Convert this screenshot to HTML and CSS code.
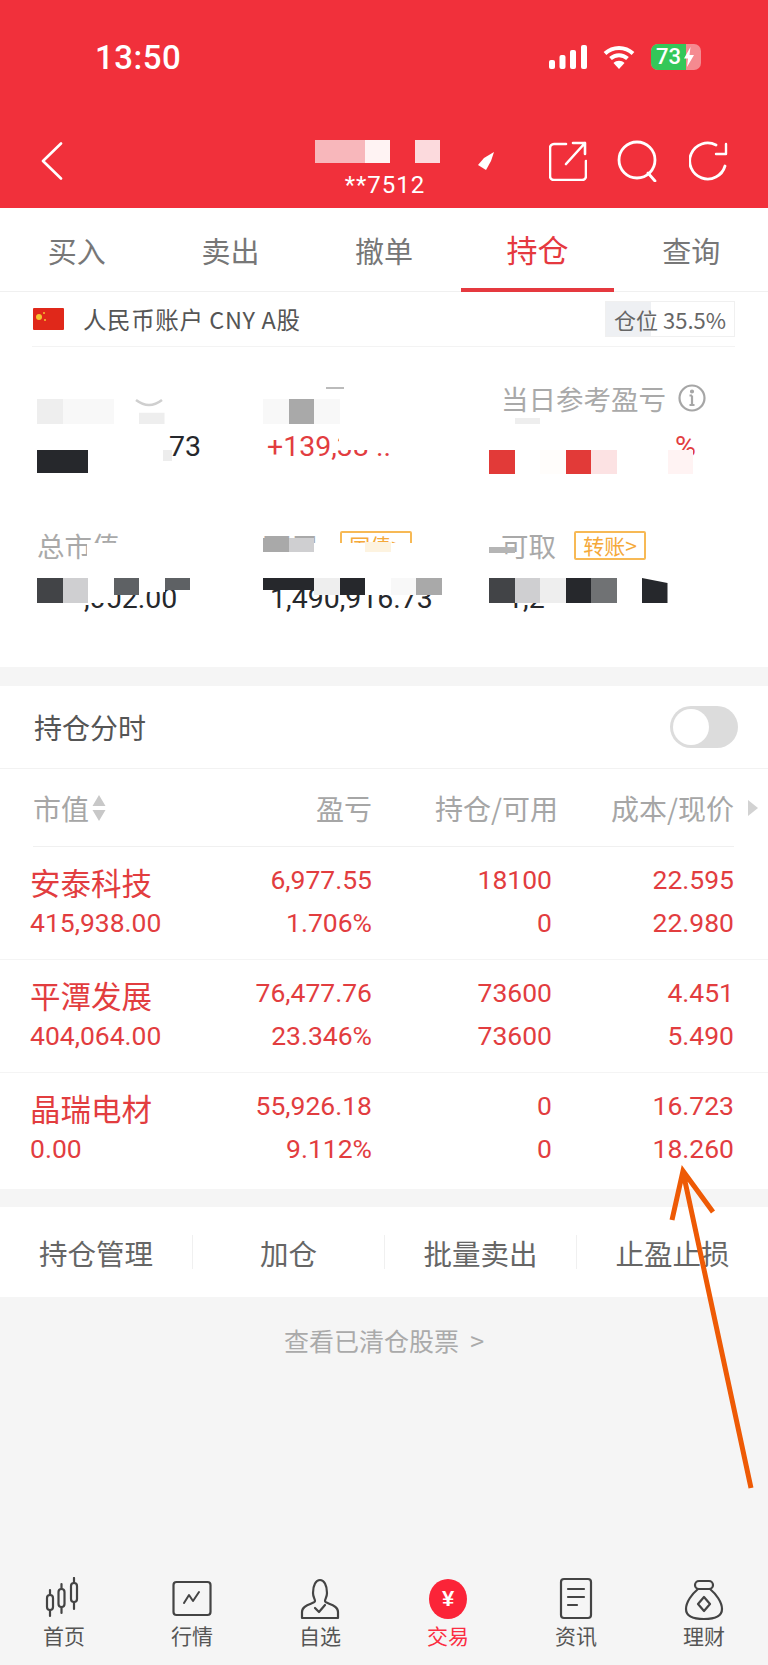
FILE: index.html
```html
<!DOCTYPE html>
<html lang="zh-CN">
<head>
    <meta charset="UTF-8">
    <meta name="viewport" content="width=device-width, initial-scale=1.0">
    <title>持仓</title>
    <link rel="stylesheet" href="styles.css">
</head>
<body>
    <div class="page">
        <!-- 顶部红色区域 -->
        <header class="top">
            <div class="status">
                <span class="time">13:50</span>
                <div class="status-icons">
                    <svg width="38" height="24" viewBox="0 0 38 24" fill="#fff">
                        <rect x="0" y="15" width="6" height="9" rx="2"/>
                        <rect x="10.5" y="10" width="6" height="14" rx="2"/>
                        <rect x="21" y="5" width="6" height="19" rx="2"/>
                        <rect x="32" y="0" width="6" height="24" rx="2"/>
                    </svg>
                    <svg width="32" height="24" viewBox="0 0 32 24" fill="none" stroke="#fff" stroke-width="4">
                        <path d="M2 8.5C10 1 22 1 30 8.5"/>
                        <path d="M7.5 13.5C12.5 9 19.5 9 24.5 13.5"/>
                        <path d="M16 24l-5.500-6c3-3 8-3 11 0z" fill="#fff" stroke="none"/>
                    </svg>
                    <div class="battery">
                        <div class="battery-fill"></div>
                        <span class="battery-num">73</span>
                        <svg class="battery-bolt" width="10" height="20" viewBox="0 0 10 20" fill="#fff"><path d="M6.500 0L0 11.500h4L3 20l7-12H5.500z"/></svg>
                    </div>
                </div>
            </div>
            <nav class="nav">
                <svg class="back" width="22" height="38" viewBox="0 0 22 38" fill="none" stroke="#fff" stroke-width="2.600" stroke-linecap="round" stroke-linejoin="round"><path d="M20 1.500L2 19l18 17.500"/></svg>
                <div class="acct">
                    <div class="acct-name">
                        <i class="pink1"></i><i class="pink1"></i><i class="pink2"></i><i></i><i class="pink3"></i>
                    </div>
                    <span class="acct-no">**7512</span>
                    <svg class="acct-mark" width="18" height="18" viewBox="0 0 18 18" fill="#fff"><path d="M7 6L17 0l-3 9-5 9-8-5z"/></svg>
                </div>
                <div class="nav-icons">
                    <svg width="38" height="40" viewBox="0 0 38 40" fill="none" stroke="#fff" stroke-width="2.600" stroke-linecap="round" stroke-linejoin="round">
                        <path d="M17 3H5a4 4 0 0 0-4 4v28a4 4 0 0 0 4 4h28a4 4 0 0 0 4-4V20"/>
                        <path d="M17 23L36 2M24 2h12v11"/>
                    </svg>
                    <svg width="42" height="42" viewBox="0 0 42 42" fill="none" stroke="#fff" stroke-width="2.800" stroke-linecap="round">
                        <circle cx="20" cy="20" r="18"/>
                        <path d="M31 33l7 8"/>
                    </svg>
                    <svg width="40" height="40" viewBox="0 0 40 40" fill="none" stroke="#fff" stroke-width="2.800" stroke-linecap="round" stroke-linejoin="round">
                        <path d="M36 25A18 18 0 1 1 27 4"/>
                        <path d="M37 3v10H27" stroke-width="2.400"/>
                    </svg>
                </div>
            </nav>
        </header>

        <!-- 交易标签 -->
        <div class="tabs">
            <div class="tab">买入</div>
            <div class="tab">卖出</div>
            <div class="tab">撤单</div>
            <div class="tab tab-on">持仓</div>
            <div class="tab">查询</div>
        </div>

        <!-- 资产概览 -->
        <section class="assets">
            <div class="account">
                <svg class="flag" width="31" height="22" viewBox="0 0 31 22">
                    <rect width="31" height="22" rx="1" fill="#e0281a"/>
                    <circle cx="6" cy="9" r="3" fill="#f4c430"/>
                    <circle cx="11" cy="5" r="1" fill="#f4c430"/>
                    <circle cx="12" cy="12" r="1" fill="#f4c430"/>
                </svg>
                <span class="account-name">人民币账户 CNY A股</span>
                <div class="ratio">
                    <div class="ratio-fill" style="width: 35.5%"></div>
                    <span class="ratio-text">仓位 35.5%</span>
                </div>
            </div>

            <div class="summary">
                <div class="cell">
                    <div class="label">&nbsp;</div>
                    <div class="value value-r1-left">73</div>
                    <div class="mos mos-l1">
                        <i class="k6"></i><i class="k7"></i><i class="k7"></i><i></i><i class="k6 clip-a"></i>
                    </div>
                    <svg class="eye" width="28" height="10" viewBox="0 0 28 10" fill="none" stroke="#cfcfcf" stroke-width="2.500"><path d="M1 1c4 3 8 5 13 5s9-2 13-5"/></svg>
                    <div class="mos mos-v1">
                        <i class="k0"></i><i class="k0"></i>
                    </div>
                    <div class="patch"></div>
                </div>
                <div class="cell">
                    <div class="label">&nbsp;</div>
                    <div class="value up">+139,38 ..</div>
                    <div class="wipe wipe-profit"></div>
                    <div class="mos mos-l1">
                        <i class="k7"></i><i class="k4"></i><i class="k7"></i>
                    </div>
                    <div class="dash"></div>
                </div>
                <div class="cell cell-wide">
                    <div class="label">当日参考盈亏
                        <svg class="info" width="28" height="30" viewBox="0 0 28 30" fill="none" stroke="#a6a6a6" stroke-width="2.200">
                            <circle cx="14" cy="15" r="12.500"/>
                            <path d="M14 12.500V22M11.500 12.500H14M11.500 22h5"/>
                            <circle cx="14" cy="8.500" r="1" fill="#a6a6a6"/>
                        </svg>
                    </div>
                    <div class="value up value-pct">%</div>
                    <div class="mos mos-l3">
                        <i></i><i class="k6 short"></i>
                    </div>
                    <div class="mos mos-v3">
                        <i class="r0"></i><i></i><i class="r3"></i><i class="r0"></i><i class="r1"></i><i></i><i></i><i class="r2"></i>
                    </div>
                </div>

                <div class="cell cell-low">
                    <div class="label">总市值</div>
                    <div class="value value-market">,002.00</div>
                    <div class="wipe wipe-market"></div>
                    <div class="mos mos-v2">
                        <i class="k1 h25"></i><i class="k5 h25"></i><i class="h25"></i><i class="k2 h17"></i><i class="h14"></i><i class="k2 h11"></i>
                    </div>
                </div>
                <div class="cell cell-low">
                    <div class="label">可用<span class="tag tag-bond">国债&gt;</span></div>
                    <div class="value value-avail">1,490,916.73</div>
                    <div class="wipe wipe-avail"></div>
                    <div class="mos mos-l2">
                        <i class="k4"></i><i class="k5"></i><i class="k8"></i><i class="k8"></i><i class="o1"></i>
                    </div>
                    <div class="mos mos-v2">
                        <i class="k0 h11"></i><i class="k0 h11"></i><i class="k6 h17"></i><i class="k0 h17"></i><i class="h17"></i><i class="k7 h17"></i><i class="k4 h17"></i>
                    </div>
                </div>
                <div class="cell cell-low cell-wide">
                    <div class="label">可取<span class="tag">转账&gt;</span></div>
                    <div class="value value-take">1,2</div>
                    <div class="bar"></div>
                    <div class="mos mos-v2">
                        <i class="k1 h25"></i><i class="k5 h25"></i><i class="k6 h25"></i><i class="k0 h25"></i><i class="k3 h25"></i><i class="h25"></i><i class="k0 h25 clip-b"></i>
                    </div>
                </div>
            </div>
        </section>

        <!-- 持仓列表 -->
        <section class="holdings">
            <div class="chart-row">
                <span>持仓分时</span>
                <div class="toggle"><div class="knob"></div></div>
            </div>
            <div class="grid grid-head">
                <div class="head-first">市值
                    <svg width="14" height="26" viewBox="0 0 14 26" fill="#c8c8c8"><path d="M7 0l6.500 11H.5zM7 26L.5 15h13z"/></svg>
                </div>
                <div class="num">盈亏</div>
                <div class="num">持仓/可用</div>
                <div class="num">成本/现价</div>
                <svg class="head-more" width="10" height="16" viewBox="0 0 10 16" fill="#d2d2d2"><path d="M0 0l10 8-10 8z"/></svg>
            </div>

            <div class="grid stock">
                <div class="name">安泰科技</div>
                <div class="num">6,977.55</div>
                <div class="num">18100</div>
                <div class="num">22.595</div>
                <div>415,938.00</div>
                <div class="num">1.706%</div>
                <div class="num">0</div>
                <div class="num">22.980</div>
            </div>
            <div class="grid stock">
                <div class="name">平潭发展</div>
                <div class="num">76,477.76</div>
                <div class="num">73600</div>
                <div class="num">4.451</div>
                <div>404,064.00</div>
                <div class="num">23.346%</div>
                <div class="num">73600</div>
                <div class="num">5.490</div>
            </div>
            <div class="grid stock stock-last">
                <div class="name">晶瑞电材</div>
                <div class="num">55,926.18</div>
                <div class="num">0</div>
                <div class="num">16.723</div>
                <div>0.00</div>
                <div class="num">9.112%</div>
                <div class="num">0</div>
                <div class="num">18.260</div>
            </div>
        </section>

        <div class="actions">
            <div class="action">持仓管理</div>
            <div class="action">加仓</div>
            <div class="action">批量卖出</div>
            <div class="action">止盈止损</div>
        </div>

        <div class="cleared">查看已清仓股票 &nbsp;&gt;</div>

        <!-- 底部导航 -->
        <footer class="tabbar">
            <div class="bar-item">
                <svg width="40" height="44" viewBox="0 0 40 44" fill="none" stroke="#444" stroke-width="2.200" stroke-linecap="round">
                    <rect x="3" y="18" width="6" height="15" rx="3"/>
                    <path d="M6 13v5M6 33v6"/>
                    <rect x="14.500" y="12" width="6" height="18" rx="3"/>
                    <path d="M17.500 7v5M17.500 30v6"/>
                    <rect x="27" y="6" width="6" height="19" rx="3"/>
                    <path d="M30 1v5M30 25v7"/>
                </svg>
                <span>首页</span>
            </div>
            <div class="bar-item">
                <svg width="40" height="44" viewBox="0 0 40 44" fill="none" stroke="#444" stroke-width="2.200" stroke-linejoin="round" stroke-linecap="round">
                    <rect x="1.500" y="5" width="37" height="33" rx="3"/>
                    <path d="M12 26l5-8 4 6 6-9" stroke-width="2"/>
                </svg>
                <span>行情</span>
            </div>
            <div class="bar-item">
                <svg width="40" height="44" viewBox="0 0 40 44" fill="none" stroke="#444" stroke-width="2.200" stroke-linejoin="round" stroke-linecap="round">
                    <path d="M13 16c0-8 3-13 7-13s7 5 7 13c0 4-2 6-2 8 0 3 13 3 13 11v6H2v-6c0-8 13-8 13-11 0-2-2-4-2-8z"/>
                    <path d="M15 31l4 4 6-7"/>
                </svg>
                <span>自选</span>
            </div>
            <div class="bar-item bar-on">
                <div class="coin">¥</div>
                <span>交易</span>
            </div>
            <div class="bar-item">
                <svg width="40" height="44" viewBox="0 0 40 44" fill="none" stroke="#444" stroke-width="2.200" stroke-linecap="round">
                    <rect x="5" y="2" width="30" height="39" rx="3"/>
                    <path d="M12 12h16M12 20h16M12 28h9"/>
                </svg>
                <span>资讯</span>
            </div>
            <div class="bar-item">
                <svg width="40" height="44" viewBox="0 0 40 44" fill="none" stroke="#444" stroke-width="2.200" stroke-linejoin="round">
                    <path d="M14 12c-6 5-12 13-12 20 0 7 6 10 18 10s18-3 18-10c0-7-6-15-12-20z"/>
                    <rect x="11" y="4" width="18" height="8" rx="4"/>
                    <path d="M20 20l6 7-6 7-6-7z"/>
                </svg>
                <span>理财</span>
            </div>
        </footer>

        <!-- 手绘箭头 -->
        <svg class="arrow" width="768" height="1665" viewBox="0 0 768 1665" fill="none" stroke="#ee5a05" stroke-width="5">
            <path d="M751 1488L683 1172M672 1220L683 1171L713 1212"/>
        </svg>
    </div>
</body>
</html>
```

FILE: styles.css
```css
* {
    box-sizing: border-box;
}

body {
    margin: 0;
    background-color: #f5f5f5;
    font-family: "Noto Sans CJK SC", "Liberation Sans", sans-serif;
}

.page {
    position: relative;
    width: 768px;
    height: 1665px;
    display: flex;
    flex-direction: column;
    overflow: hidden;
}

/* 顶部 */
.top {
    height: 208px;
    background-color: #f1303b;
    color: #fff;
}

.status {
    height: 114px;
    padding: 0 67px 0 95px;
    display: flex;
    justify-content: space-between;
    align-items: center;
}

.time {
    font-family: Roboto, sans-serif;
    font-size: 33px;
    font-weight: 500;
    letter-spacing: 0.5px;
}

.status-icons {
    display: flex;
    align-items: center;
    gap: 16px;
}

.battery {
    position: relative;
    width: 50px;
    height: 26px;
    border-radius: 7px;
    background-color: #f58a90;
    overflow: hidden;
}

.battery-fill {
    width: 35px;
    height: 100%;
    background-color: #34c759;
}

.battery-num {
    position: absolute;
    left: 5px;
    top: 0;
    line-height: 26px;
    font-family: Roboto, sans-serif;
    font-size: 22px;
    font-weight: 500;
    color: #fff;
}

.battery-bolt {
    position: absolute;
    left: 33px;
    top: 3px;
}

.nav {
    height: 94px;
    padding: 0 39px 0 41px;
    display: grid;
    grid-template-columns: 1fr auto 1fr;
    align-items: center;
}

.acct {
    position: relative;
    display: flex;
    flex-direction: column;
    align-items: center;
    margin-top: 17px;
}

.acct-name {
    display: flex;
    height: 23px;
    margin-right: 16px;
}

.acct-name i {
    width: 25px;
}

.pink1 {
    background-color: #f8b7bb;
}

.pink2 {
    background-color: #fff3f3;
}

.pink3 {
    background-color: #fcdadd;
}

.acct-no {
    margin-top: 7px;
    line-height: 30px;
    font-family: Roboto, sans-serif;
    font-size: 24px;
    letter-spacing: 1px;
}

.acct-mark {
    position: absolute;
    left: 162px;
    top: 12px;
}

.nav-icons {
    justify-self: end;
    display: flex;
    align-items: center;
    gap: 30px;
}

/* 标签 */
.tabs {
    height: 84px;
    background-color: #fff;
    border-bottom: 1px solid #f0f0f0;
    display: grid;
    grid-template-columns: repeat(5, 1fr);
}

.tab {
    display: flex;
    justify-content: center;
    align-items: center;
    font-size: 29px;
    color: #777;
}

.tab-on {
    font-size: 31px;
    color: #e5393f;
    border-bottom: 4px solid #e5393f;
    height: 84px;
}

/* 资产 */
.assets {
    height: 375px;
    background-color: #fff;
}

.account {
    position: relative;
    height: 55px;
    margin: 0 33px 0 32px;
    border-bottom: 1px solid #f3f3f3;
    display: flex;
    align-items: center;
}

.flag {
    margin-left: 1px;
}

.account-name {
    margin-left: 19px;
    font-size: 23.500px;
    letter-spacing: 0.6px;
    color: #555;
}

.ratio {
    position: relative;
    margin-left: auto;
    width: 130px;
    height: 36px;
    border: 1px solid #f0f0f0;
    display: flex;
    align-items: center;
    justify-content: flex-end;
    padding-right: 8px;
}

.ratio-fill {
    position: absolute;
    left: 0;
    top: 0;
    height: 100%;
    background-color: #eef0f3;
}

.ratio-text {
    position: relative;
    font-size: 22px;
    color: #666;
}

.summary {
    padding: 34px 0 0 37px;
    display: grid;
    grid-template-columns: 226px 226px 1fr;
    row-gap: 63px;
}

.cell {
    position: relative;
}

.cell-wide .label,
.cell-wide .value {
    padding-left: 12px;
}

.label {
    height: 34px;
    display: flex;
    align-items: center;
    font-size: 27.500px;
    color: #a9a9a9;
}

.info {
    margin-left: 12px;
}

.tag {
    margin-left: 18px;
    width: 72px;
    height: 29px;
    border: 2px solid #f7b955;
    border-radius: 2px;
    display: flex;
    justify-content: center;
    align-items: center;
    font-size: 21px;
    color: #f5a93a;
}

.tag-bond {
    margin-left: 22px;
}

.value {
    margin-top: 14px;
    height: 36px;
    line-height: 36px;
    font-family: Roboto, sans-serif;
    font-size: 28.500px;
    color: #26282c;
}

.cell-low .value {
    margin-top: 19px;
}

.up {
    color: #e23d3f;
}

.value-r1-left {
    padding-left: 132px;
}

.value.up:not(.value-pct) {
    padding-left: 4px;
}

.value-pct.value-pct {
    padding-left: 186px;
}

.value-market {
    padding-left: 47px;
}

.value-avail {
    padding-left: 7px;
}

.value-take.value-take {
    padding-left: 18px;
}

/* 打码色块 */
.mos {
    position: absolute;
    left: 0;
    display: flex;
    align-items: flex-start;
}

.mos i {
    display: block;
    width: 25.500px;
    height: 100%;
    background-color: #fff;
}

.mos-l1 {
    top: 18px;
    height: 25px;
}

.mos-v1 {
    top: 69px;
    height: 23px;
}

.mos-l3 {
    top: 37px;
    height: 6px;
    left: 0;
}

.mos-v3 {
    top: 69px;
    height: 24px;
}

.mos-v2 {
    top: 50px;
}

.mos-l2 {
    top: 10px;
    height: 14px;
}

.mos .short {
    height: 6px;
}

.mos .h25 {
    height: 25px;
}

.mos .h17 {
    height: 17px;
}

.mos .h14 {
    height: 14px;
}

.mos .h11 {
    height: 12px;
}

.mos .k0 { background-color: #26282c; }
.mos .k1 { background-color: #424447; }
.mos .k2 { background-color: #5e6164; }
.mos .k3 { background-color: #707274; }
.mos .k4 { background-color: #a9a9a9; }
.mos .k5 { background-color: #cfcfd1; }
.mos .k6 { background-color: #eeeeee; }
.mos .k7 { background-color: #f8f8f8; }
.mos .k8 { background-color: transparent; }
.mos .r0 { background-color: #e23a38; }
.mos .r1 { background-color: #fce2e3; }
.mos .r2 { background-color: #fff3f3; }
.mos .r3 { background-color: #fffdfb; }
.mos .o1 { background-color: #fdf3e0; margin-top: 4px; height: 10px; }

.clip-a {
    clip-path: polygon(0 55%, 100% 55%, 100% 100%, 0 100%);
}

.clip-b {
    clip-path: polygon(0 0, 100% 20%, 100% 100%, 0 100%);
}

.eye {
    position: absolute;
    left: 98px;
    top: 18px;
}

.patch {
    position: absolute;
    left: 126px;
    top: 69px;
    width: 9px;
    height: 11px;
    background-color: #ededed;
}

.wipe {
    position: absolute;
    background-color: #fff;
}

.wipe-profit {
    left: 76px;
    top: 44px;
    width: 90px;
    height: 25px;
}

.wipe-market {
    left: 50px;
    top: 15px;
    width: 62px;
    height: 19px;
}

.wipe-avail {
    left: 0;
    top: 15px;
    width: 160px;
    height: 19px;
}

.dash {
    position: absolute;
    left: 63px;
    top: 6px;
    width: 18px;
    height: 2px;
    background-color: #bbb;
}

.bar {
    position: absolute;
    left: 0;
    top: 19px;
    width: 26px;
    height: 6px;
    background-color: #b5b5b5;
}

/* 持仓列表 */
.holdings {
    margin-top: 19px;
    background-color: #fff;
}

.chart-row {
    height: 83px;
    padding: 0 30px 0 34px;
    border-bottom: 1px solid #f2f2f2;
    display: flex;
    justify-content: space-between;
    align-items: center;
    font-size: 28px;
    color: #555;
}

.toggle {
    width: 68px;
    height: 42px;
    border-radius: 21px;
    background-color: #dcdcdc;
    padding: 3px;
}

.knob {
    width: 36px;
    height: 36px;
    border-radius: 50%;
    background-color: #fff;
}

.grid {
    display: grid;
    grid-template-columns: 180px 162px 180px 182px;
    padding-left: 30px;
}

.grid-head {
    position: relative;
    height: 78px;
    margin: 0 34px 0 33px;
    padding-left: 0;
    grid-template-columns: 179px 160px 186px 176px;
    align-items: center;
    font-size: 28px;
    color: #a6a6a6;
    border-bottom: 1px solid #f0f0f0;
}

.head-first {
    display: flex;
    align-items: center;
    gap: 3px;
}

.head-more {
    position: absolute;
    left: 715px;
    top: 31px;
}

.num {
    text-align: right;
}

.stock {
    height: 113px;
    padding-top: 11px;
    grid-auto-rows: 43px;
    align-items: center;
    font-family: Roboto, sans-serif;
    font-size: 26.500px;
    color: #e23d3f;
    border-bottom: 1px solid #f4f4f4;
}

.stock-last {
    height: 116px;
    border-bottom: 0;
}

.name {
    font-family: "Noto Sans CJK SC", sans-serif;
    font-size: 30.500px;
    line-height: 43px;
    padding-top: 6px;
}

/* 操作栏 */
.actions {
    margin-top: 18px;
    height: 90px;
    background-color: #fff;
    display: grid;
    grid-template-columns: repeat(4, 1fr);
    align-items: center;
}

.action {
    height: 34px;
    display: flex;
    justify-content: center;
    align-items: center;
    font-size: 28.500px;
    color: #666;
    border-left: 1px solid #f0f0f0;
}

.action:first-child {
    border-left: 0;
}

.cleared {
    margin-top: 26px;
    text-align: center;
    font-size: 25px;
    line-height: 34px;
    color: #aaa;
}

/* 底部导航 */
.tabbar {
    margin-top: auto;
    height: 102px;
    display: grid;
    grid-template-columns: repeat(6, 1fr);
}

.bar-item {
    display: flex;
    flex-direction: column;
    align-items: center;
    padding-top: 14px;
    font-size: 21px;
    line-height: 28px;
    color: #555;
}

.bar-on {
    color: #fb2d42;
}

.coin {
    width: 38px;
    height: 40px;
    margin: 2px 0;
    border-radius: 50%;
    background-color: #fb2438;
    color: #fff;
    display: flex;
    justify-content: center;
    align-items: center;
    font-family: "Liberation Sans", sans-serif;
    font-size: 22px;
    font-weight: 700;
}

.arrow {
    position: absolute;
    left: 0;
    top: 0;
    pointer-events: none;
}
```
